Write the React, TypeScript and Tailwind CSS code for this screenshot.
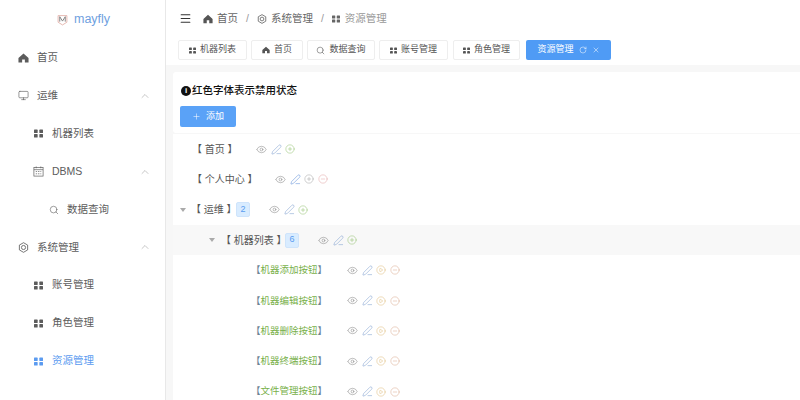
import React from "react";
import { ChevronUp, Monitor, Search, RotateCw, X, Plus, Eye, PenLine, CirclePlus, CircleMinus, CirclePlay, Menu } from "lucide-react";

const font = { fontFamily: '"Liberation Sans", "Noto Sans CJK SC", sans-serif' };

function HomeIcon({ c = "w-3 h-3" }: { c?: string }) {
  return (
    <svg viewBox="0 0 24 24" className={c} fill="currentColor">
      <path d="M12 2 L23 12 V22 H15 V15 H9 V22 H1 V12 Z" />
    </svg>
  );
}

function GridIcon({ c = "w-[9px] h-[9px]" }: { c?: string }) {
  return (
    <svg viewBox="0 0 16 16" className={c} fill="currentColor">
      <rect x="0" y="1" width="6.5" height="6" rx="1" />
      <rect x="9.5" y="1" width="6.5" height="6" rx="1" />
      <rect x="0" y="9" width="6.5" height="6" rx="1" />
      <rect x="9.5" y="9" width="6.5" height="6" rx="1" />
    </svg>
  );
}

function GearIcon({ c = "w-[11px] h-[11px]" }: { c?: string }) {
  return (
    <svg viewBox="0 0 24 24" className={c} fill="none" stroke="currentColor" strokeWidth="1.8">
      <path d="M12 1.5 L21 6.7 V17.3 L12 22.5 L3 17.3 V6.7 Z" strokeLinejoin="round" />
      <circle cx="12" cy="12" r="4.5" />
    </svg>
  );
}

function CalIcon() {
  return (
    <svg viewBox="0 0 24 24" className="w-[11px] h-[11px]" fill="none" stroke="currentColor" strokeWidth="1.5">
      <rect x="2" y="3" width="20" height="19" />
      <path d="M2 8h20M7 1v4M17 1v4" />
      <path d="M6 12h3M11 12h3M16 12h2M6 17h3M11 17h3M16 17h2" />
    </svg>
  );
}

function SideItem({ icon, label, pad, chevron, active }: { icon: React.ReactNode; label: string; pad: string; chevron?: boolean; active?: boolean }) {
  return (
    <div className={`h-[37.9px] flex items-center ${pad} ${active ? "text-[#5b9bf0]" : "text-[#5c5c5c]"}`}>
      <span className="w-[11px] flex justify-center mr-[8px]">{icon}</span>
      <span className="text-[10.5px] flex-1">{label}</span>
      {chevron && <ChevronUp className="w-[12px] h-[12px] mr-[14px] text-[#999]" strokeWidth={1.1} />}
    </div>
  );
}

function Tab({ icon, label, w, mr }: { icon: React.ReactNode; label: string; w: string; mr: string }) {
  return (
    <div className={`h-[20px] ${w} ${mr} shrink-0 flex items-center justify-center gap-[4px] bg-white border border-[#eeeeee] rounded-[2px] text-[9px] text-[#555]`}>
      {icon}
      <span>{label}</span>
    </div>
  );
}

function Actions({ gap, plus = "text-[#8fbf6a]", play, minus = "text-[#e0a0a0]", edit = "text-[#7f9fd0]" }: { gap: string; plus?: string; play?: string; minus?: string; edit?: string }) {
  return (
    <span className={`inline-flex items-center gap-[3.5px] ${gap}`}>
      <Eye className="w-[11px] h-[11px] text-[#888]" strokeWidth={1.2} />
      <PenLine className={`w-[11px] h-[11px] ${edit}`} strokeWidth={1.2} />
      {play ? <CirclePlay className={`w-[10px] h-[10px] ${play}`} strokeWidth={1.2} /> : <CirclePlus className={`w-[10px] h-[10px] ${plus}`} strokeWidth={1.2} />}
      {minus !== "none" && <CircleMinus className={`w-[10px] h-[10px] ${minus}`} strokeWidth={1.2} />}
    </span>
  );
}

function Badge({ n }: { n: number }) {
  return <span className="ml-[3px] w-[14px] h-[15px] flex items-center justify-center bg-[#d9ecff] border border-[#cfe4fb] rounded-[2px] text-[9px] text-[#5a9cf0]">{n}</span>;
}

const leaves = ["机器添加按钮", "机器编辑按钮", "机器删除按钮", "机器终端按钮", "文件管理按钮"];

export default function App() {
  return (
    <div style={font} className="w-[800px] h-[400px] overflow-hidden flex bg-[#f7f7f7]">
      <aside className="w-[166px] shrink-0 h-full flex flex-col bg-white border-r border-[#e8e8e8]">
        <div className="h-[39px] shrink-0 flex items-center pl-[57px] gap-[6px]">
          <svg viewBox="0 0 20 20" className="w-[11px] h-[12px]" fill="none" strokeWidth="1.6">
            <path d="M2 2 H18 V14 L10 19 L2 14 Z" stroke="#e3b0a8" />
            <path d="M5 4 V13 M15 4 V13 M5 4 L10 12 L15 4" stroke="#777" />
          </svg>
          <span className="text-[12.5px] text-[#6f9fe0]">mayfly</span>
        </div>
        <SideItem pad="pl-[18px]" icon={<HomeIcon />} label="首页" />
        <SideItem pad="pl-[18px]" icon={<Monitor className="w-[11px] h-[11px]" strokeWidth={1.4} />} label="运维" chevron />
        <SideItem pad="pl-[33px]" icon={<GridIcon />} label="机器列表" />
        <SideItem pad="pl-[33px]" icon={<CalIcon />} label="DBMS" chevron />
        <SideItem pad="pl-[48px]" icon={<Search className="w-[10px] h-[10px]" strokeWidth={1.4} />} label="数据查询" />
        <SideItem pad="pl-[18px]" icon={<GearIcon />} label="系统管理" chevron />
        <SideItem pad="pl-[33px]" icon={<GridIcon />} label="账号管理" />
        <SideItem pad="pl-[33px]" icon={<GridIcon />} label="角色管理" />
        <SideItem pad="pl-[33px]" active icon={<GridIcon />} label="资源管理" />
      </aside>

      <main className="flex-1 min-w-0 flex flex-col">
        <header className="h-[37px] shrink-0 bg-white flex items-center pl-[13px] text-[10.5px] text-[#666]">
          <Menu className="w-[13px] h-[13px] mr-[11px] text-[#333]" strokeWidth={2} />
          <HomeIcon c="w-[10px] h-[10px] text-[#555] mr-[4px]" />
          <span>首页</span>
          <span className="mx-[8px] text-[#999]">/</span>
          <GearIcon c="w-[10px] h-[10px] text-[#555] mr-[4px]" />
          <span>系统管理</span>
          <span className="mx-[8px] text-[#999]">/</span>
          <GridIcon c="w-[8px] h-[8px] text-[#666] mr-[5px]" />
          <span className="text-[#999]">资源管理</span>
        </header>

        <div className="h-[28px] shrink-0 bg-white flex items-start pl-[12px] pt-[3px]">
          <Tab w="w-[69px]" mr="mr-[4px]" icon={<GridIcon c="w-[7px] h-[7px]" />} label="机器列表" />
          <Tab w="w-[52px]" mr="mr-[4px]" icon={<HomeIcon c="w-[8px] h-[8px]" />} label="首页" />
          <Tab w="w-[68px]" mr="mr-[4px]" icon={<Search className="w-[9px] h-[9px]" strokeWidth={1.5} />} label="数据查询" />
          <Tab w="w-[69px]" mr="mr-[5px]" icon={<GridIcon c="w-[7px] h-[7px]" />} label="账号管理" />
          <Tab w="w-[67px]" mr="mr-[6px]" icon={<GridIcon c="w-[7px] h-[7px]" />} label="角色管理" />
          <div className="h-[20px] w-[85px] shrink-0 flex items-center justify-center gap-[5px] bg-[#4f9bf5] rounded-[2px] text-[9px] text-white">
            <span>资源管理</span>
            <RotateCw className="w-[8px] h-[8px]" strokeWidth={1.5} />
            <X className="w-[8px] h-[8px]" strokeWidth={1.5} />
          </div>
        </div>

        <div className="flex-1 min-h-0 pl-[7px] pt-[7px]">
          <section className="h-[61px] bg-white rounded-l-[3px] pl-[7px] pt-[11px]">
            <div className="ml-[1px] flex items-center text-[10.5px] font-medium text-[#111]">
              <span className="w-[10px] h-[10px] mr-[1px] rounded-full bg-[#111] text-white text-[8px] font-bold flex items-center justify-center">i</span>
              <span>红色字体表示禁用状态</span>
            </div>
            <div className="mt-[7px] w-[56px] h-[21px] flex items-center justify-center gap-[5px] bg-[#5aa2f7] rounded-[2px] text-[9px] text-white">
              <Plus className="w-[9px] h-[9px]" strokeWidth={1.4} />
              <span>添加</span>
            </div>
          </section>

          <section className="mt-[1px] bg-white text-[10px] text-[#555]">
            <div className="h-[30.3px] flex items-center pl-[19px]">
              <span className="w-[44px] whitespace-nowrap">【 首页 】</span>
              <Actions gap="ml-[20px]" minus="none" />
            </div>
            <div className="h-[30.3px] flex items-center pl-[19px]">
              <span className="w-[65px] whitespace-nowrap">【 个人中心 】</span>
              <Actions gap="ml-[18px]" edit="text-[#5f8fd8]" plus="text-[#a0a0a0]" />
            </div>
            <div className="h-[30.3px] flex items-center pl-[7px]">
              <span className="w-0 h-0 mr-[5px] border-x-[3px] border-x-transparent border-t-[4px] border-t-[#aaa]" />
              <span className="w-[42px] whitespace-nowrap">【 运维 】</span>
              <Badge n={2} />
              <Actions gap="ml-[19px]" plus="text-[#8fbf6a]" minus="none" />
            </div>
            <div className="h-[30.3px] flex items-center pl-[36px] bg-[#f8f8f8]">
              <span className="w-0 h-0 mr-[6px] border-x-[3px] border-x-transparent border-t-[4px] border-t-[#aaa]" />
              <span className="w-[61px] whitespace-nowrap">【 机器列表 】</span>
              <Badge n={6} />
              <Actions gap="ml-[19px]" plus="text-[#8fbf6a]" minus="none" />
            </div>
            {leaves.map((l) => (
              <div key={l} className="h-[30.3px] flex items-center pl-[78px] text-[9.5px]">
                <span className="w-[76px] whitespace-nowrap">
                  <span className="text-[#6d8494]">【</span>
                  <span className="text-[#78b04a]">{l}</span>
                  <span className="text-[#6d8494]">】</span>
                </span>
                <Actions gap="ml-[20px]" play="text-[#dcb877]" minus="text-[#d9a68a]" />
              </div>
            ))}
          </section>
        </div>
      </main>
    </div>
  );
}
